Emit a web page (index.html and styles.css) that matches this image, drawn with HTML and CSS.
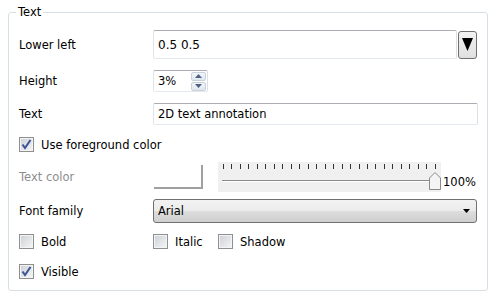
FILE: index.html
```html
<!DOCTYPE html>
<html lang="en">
<head>
    <meta charset="UTF-8">
    <title>Text annotation</title>
    <link rel="stylesheet" href="styles.css">
</head>
<body>
    <div class="group">
        <div class="group-title">Text</div>

        <div class="row row-lower">
            <span class="lbl">Lower left</span>
            <div class="edit edit-lower">0.5 0.5</div>
            <div class="pick">
                <svg width="11" height="13" viewBox="0 0 11 13"><polygon points="0,0 11,0 5.5,13" fill="#000"/></svg>
            </div>
        </div>

        <div class="row row-height">
            <span class="lbl">Height</span>
            <div class="edit spin">
                <span class="spin-value">3%</span>
                <span class="spin-btns">
                    <span class="spin-btn"><svg width="7" height="4" viewBox="0 0 7 4"><polygon points="0,4 7,4 3.5,0" fill="#4d6185"/></svg></span>
                    <span class="spin-btn"><svg width="7" height="4" viewBox="0 0 7 4"><polygon points="0,0 7,0 3.5,4" fill="#4d6185"/></svg></span>
                </span>
            </div>
        </div>

        <div class="row row-text">
            <span class="lbl">Text</span>
            <div class="edit edit-text">2D text annotation</div>
        </div>

        <div class="row row-fg">
            <span class="check checked"><svg width="11" height="11" viewBox="0 0 11 11"><path d="M1.5 5.5 L4 9 L9.5 1" fill="none" stroke="#3b5495" stroke-width="2"/></svg></span>
            <span class="check-lbl">Use foreground color</span>
        </div>

        <div class="row row-color">
            <span class="lbl lbl-off">Text color</span>
            <div class="swatch"></div>
            <div class="slider">
                <div class="ticks">
                    <i></i><i></i><i></i><i></i><i></i><i></i><i></i><i></i><i></i><i></i><i></i><i></i><i></i>
                    <i></i><i></i><i></i><i></i><i></i><i></i><i></i><i></i><i></i><i></i><i></i><i></i><i></i>
                </div>
                <div class="groove"></div>
                <svg class="thumb" width="12" height="18" viewBox="0 0 12 18"><path d="M0.5 17.5 V6 L6 0.5 L11.5 6 V17.5 Z" fill="#f4f4f4" stroke="#8a8a8a"/></svg>
            </div>
            <span class="pct">100%</span>
        </div>

        <div class="row row-font">
            <span class="lbl">Font family</span>
            <div class="combo">
                <span>Arial</span>
                <svg width="7" height="4" viewBox="0 0 7 4"><polygon points="0,0 7,0 3.5,4" fill="#000"/></svg>
            </div>
        </div>

        <div class="row row-style">
            <div class="opt opt-bold">
                <span class="check"></span>
                <span class="check-lbl">Bold</span>
            </div>
            <div class="opt opt-italic">
                <span class="check"></span>
                <span class="check-lbl">Italic</span>
            </div>
            <div class="opt">
                <span class="check"></span>
                <span class="check-lbl">Shadow</span>
            </div>
        </div>

        <div class="row row-visible">
            <span class="check checked"><svg width="11" height="11" viewBox="0 0 11 11"><path d="M1.5 5.5 L4 9 L9.5 1" fill="none" stroke="#3b5495" stroke-width="2"/></svg></span>
            <span class="check-lbl">Visible</span>
        </div>
    </div>
</body>
</html>
```

FILE: styles.css
```css
body {
    margin: 0;
    background-color: #fff;
    font-family: "DejaVu Sans", Tahoma, sans-serif;
    font-size: 11.5px;
    color: #000;
}
.group {
    margin: 12px 9px 0 8px;
    height: 277px;
    border: 1px solid #d5dfe5;
    border-radius: 3px;
    padding-left: 10px;
}
.group-title {
    width: fit-content;
    margin: -8px 0 0 -3px;
    padding: 0 2px;
    background-color: #fff;
    line-height: 14px;
}
.row {
    display: flex;
    align-items: center;
}
.lbl {
    width: 134px;
    flex-shrink: 0;
}
.lbl-off {
    color: #8d8d8d;
}
.edit {
    box-sizing: border-box;
    display: flex;
    align-items: center;
    padding-left: 4px;
    border: 1px solid;
    border-color: #abadb3 #dbdfe6 #e3e9ef #e2e3ea;
    border-radius: 2px;
    background-color: #fff;
}
.row-lower {
    margin-top: 11px;
}
.edit-lower {
    width: 304px;
    height: 29px;
    font-size: 12px;
}
.pick {
    box-sizing: border-box;
    width: 19px;
    height: 28px;
    margin-left: 1px;
    display: flex;
    align-items: center;
    justify-content: center;
    border: 1px solid #707070;
    border-radius: 3px;
    background: linear-gradient(#f2f2f2, #e0e0e0);
}
.row-height {
    margin-top: 11px;
}
.spin {
    width: 55px;
    height: 22px;
    padding-right: 1px;
}
.spin-value {
    flex: 1;
}
.spin-btns {
    display: flex;
    flex-direction: column;
    gap: 1px;
}
.spin-btn {
    box-sizing: border-box;
    width: 15px;
    height: 9px;
    display: flex;
    align-items: center;
    justify-content: center;
    border: 1px solid #c9d2dc;
    border-radius: 2px;
    background: linear-gradient(#f3f6f9, #dfe6ee);
}
.row-text {
    margin-top: 11px;
}
.edit-text {
    width: 325px;
    height: 22px;
}
.row-fg {
    margin-top: 12px;
}
.check {
    box-sizing: border-box;
    width: 15px;
    height: 15px;
    flex-shrink: 0;
    display: flex;
    align-items: center;
    justify-content: center;
    border: 1px solid #8e8f8f;
    box-shadow: inset 0 0 0 1px #f4f4f4;
    background: linear-gradient(135deg, #cbcfd5, #f6f6f6);
}
.check-lbl {
    margin-left: 7px;
}
.row-color {
    margin-top: 10px;
    height: 30px;
}
.swatch {
    box-sizing: border-box;
    width: 49px;
    height: 24px;
    margin-left: 1px;
    border-right: 2px solid #a0a0a0;
    border-bottom: 2px solid #a0a0a0;
}
.slider {
    position: relative;
    width: 223px;
    height: 30px;
    margin-left: 15px;
    background-color: #f0f0f0;
}
.ticks {
    display: flex;
    justify-content: space-between;
    padding: 2px 5px 0 5px;
}
.ticks i {
    width: 1px;
    height: 5px;
    background-color: #333;
}
.groove {
    margin: 11px 4px 0 4px;
    height: 1px;
    border-top: 1px solid #8a8a8a;
    background-color: #fff;
}
.thumb {
    position: absolute;
    right: 0;
    top: 10px;
}
.pct {
    margin-left: 2px;
    padding-top: 10px;
}
.row-font {
    margin-top: 7px;
}
.combo {
    box-sizing: border-box;
    width: 324px;
    height: 24px;
    display: flex;
    align-items: center;
    justify-content: space-between;
    padding: 0 6px 0 4px;
    border: 1px solid #707070;
    border-radius: 3px;
    background: linear-gradient(#f2f2f2 0%, #ebebeb 50%, #dddddd 51%, #cfcfcf 100%);
}
.row-style {
    margin-top: 11px;
}
.opt {
    display: flex;
    align-items: center;
}
.opt-bold {
    width: 134px;
}
.opt-italic {
    width: 65px;
}
.row-visible {
    margin-top: 15px;
}
```
